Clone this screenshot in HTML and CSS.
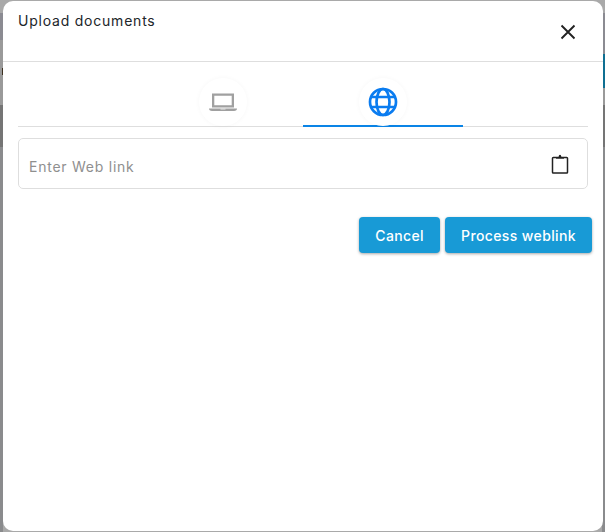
FILE: index.html
```html
<!DOCTYPE html>
<html lang="en">
<head>
<meta charset="utf-8">
<title>Upload documents</title>
<link rel="stylesheet" href="styles.css">
</head>
<body>
<div class="backdrop">
  <div class="strip strip-left">
    <span class="seg seg-a"></span><span class="seg seg-b"><i class="mark"></i></span><span class="seg seg-c"></span><span class="seg seg-d"></span>
  </div>
  <div class="strip strip-right">
    <span class="seg seg-a seg-short"></span><span class="seg seg-blue"></span><span class="seg seg-b seg-b-short"></span><span class="seg seg-c"></span><span class="seg seg-d"></span>
  </div>
  <div class="modal">
    <header class="modal-head">
      <h1 class="title">Upload documents</h1>
      <button class="close" aria-label="Close">
        <svg width="16" height="16" viewBox="0 0 16 16"><path d="M1.500 1.500l13 13M14.500 1.500l-13 13" stroke="#222" stroke-width="1.900" fill="none"/></svg>
      </button>
    </header>
    <div class="modal-body">
      <div class="tabs">
        <div class="tab">
          <span class="tab-icon">
            <svg width="30" height="22" viewBox="0 0 30 22"><path d="M4 2.500h22v14H4zM6.300 4.800v9.400h17.400V4.800z" fill="#a0a0a0" fill-rule="evenodd"/><path d="M1 17.500h28c0 1.300-1 2.500-3 2.500H4c-2 0-3-1.200-3-2.500z" fill="#a0a0a0"/><path d="M12.500 17.500h5v1h-5z" fill="#e8e8e8"/></svg>
          </span>
        </div>
        <div class="tab tab-active">
          <span class="tab-icon">
            <svg width="30" height="30" viewBox="0 0 30 30" fill="none" stroke="#0a7cf0" stroke-width="2.700"><circle cx="15" cy="15" r="13"/><ellipse cx="15" cy="15" rx="6.500" ry="13"/><path d="M3.500 10h23M3.500 20h23"/></svg>
          </span>
        </div>
      </div>
      <div class="field">
        <span class="placeholder">Enter Web link</span>
        <svg class="clip" width="18" height="20" viewBox="0 0 18 20" fill="none"><path d="M5 3.500H2.300a.8.800 0 0 0-.8.800v13.900a.8.800 0 0 0 .8.800h13.400a.8.800 0 0 0 .8-.8V4.300a.8.800 0 0 0-.8-.8H13" stroke="#222" stroke-width="1.500"/><path d="M5 2.800h2.600C7.800 1.500 8.300.8 9 .8s1.200.7 1.400 2H13v1.900H5z" fill="#222"/></svg>
      </div>
      <div class="actions">
        <button class="btn">Cancel</button>
        <button class="btn">Process weblink</button>
      </div>
    </div>
  </div>
</div>
</body>
</html>
```
FILE: styles.css
```css
* { box-sizing: border-box; }
html, body { margin: 0; height: 100%; }
body { font-family: Inter, "Liberation Sans", sans-serif; overflow: hidden; }
.backdrop {
  position: relative;
  width: 605px;
  height: 532px;
  background: #a9a9a9;
  padding: 1px 2px 1px 3px;
}
.strip {
  position: absolute;
  top: 13px;
  bottom: 0;
  width: 3px;
  display: flex;
  flex-direction: column;
}
.strip-left { left: 0; }
.strip-right { right: 0; }
.seg { display: block; position: relative; }
.seg-a { height: 27px; background: #8b8b92; }
.seg-short { height: 41px; }
.seg-blue { height: 34px; background: #0f6f92; }
.seg-b { height: 65px; background: #9a9a9a; }
.seg-b-short { height: 17px; }
.seg-c { height: 42px; background: #757575; }
.seg-d { flex: 1; background: #8a8b8d; }
.mark {
  position: absolute;
  right: 0;
  top: 28px;
  width: 1px;
  height: 7px;
  background: #3d3020;
}
.modal {
  position: relative;
  height: 530px;
  background: #fff;
  border-radius: 10px;
  overflow: hidden;
}
.modal-head {
  height: 61px;
  border-bottom: 1px solid #dedede;
  position: relative;
  padding: 11px 15px 0;
}
.title {
  margin: 0;
  font-size: 14px;
  font-weight: 400;
  line-height: 17px;
  color: #212529;
  letter-spacing: .78px;
}
.close {
  position: absolute;
  right: 27px;
  top: 23px;
  width: 16px;
  height: 16px;
  padding: 0;
  border: 0;
  background: none;
  display: flex;
}
.modal-body { padding: 0 15px; }
.tabs {
  display: flex;
  justify-content: center;
  height: 65px;
  border-bottom: 1px solid #dedede;
  margin-bottom: 11px;
}
.tab {
  width: 160px;
  height: 65px;
  display: flex;
  justify-content: center;
  padding-top: 16px;
}
.tab-active { border-bottom: 2px solid #0a84e6; height: 65px; }
.tab-icon {
  width: 48px;
  height: 48px;
  border-radius: 50%;
  background: #fff;
  box-shadow: 0 0 5px rgba(0,0,0,.035);
  display: flex;
  align-items: center;
  justify-content: center;
}
.field {
  height: 51px;
  border: 1px solid #dedede;
  border-radius: 5px;
  display: flex;
  align-items: center;
  justify-content: space-between;
  padding: 0 18px 0 10px;
}
.placeholder {
  font-size: 14px;
  color: #8f8f8f;
  letter-spacing: .75px;
  padding-top: 5px;
}
.actions {
  display: flex;
  justify-content: flex-end;
  gap: 5px;
  margin-top: 28px;
  margin-right: -4px;
}
.btn {
  height: 36px;
  padding: 0 16px;
  border: 0;
  border-radius: 4px;
  background: #189ad6;
  color: #fff;
  font: 500 14px Inter, "Liberation Sans", sans-serif;
  letter-spacing: .38px;
  box-shadow: 0 1px 3px rgba(0,0,0,.35);
}
```
